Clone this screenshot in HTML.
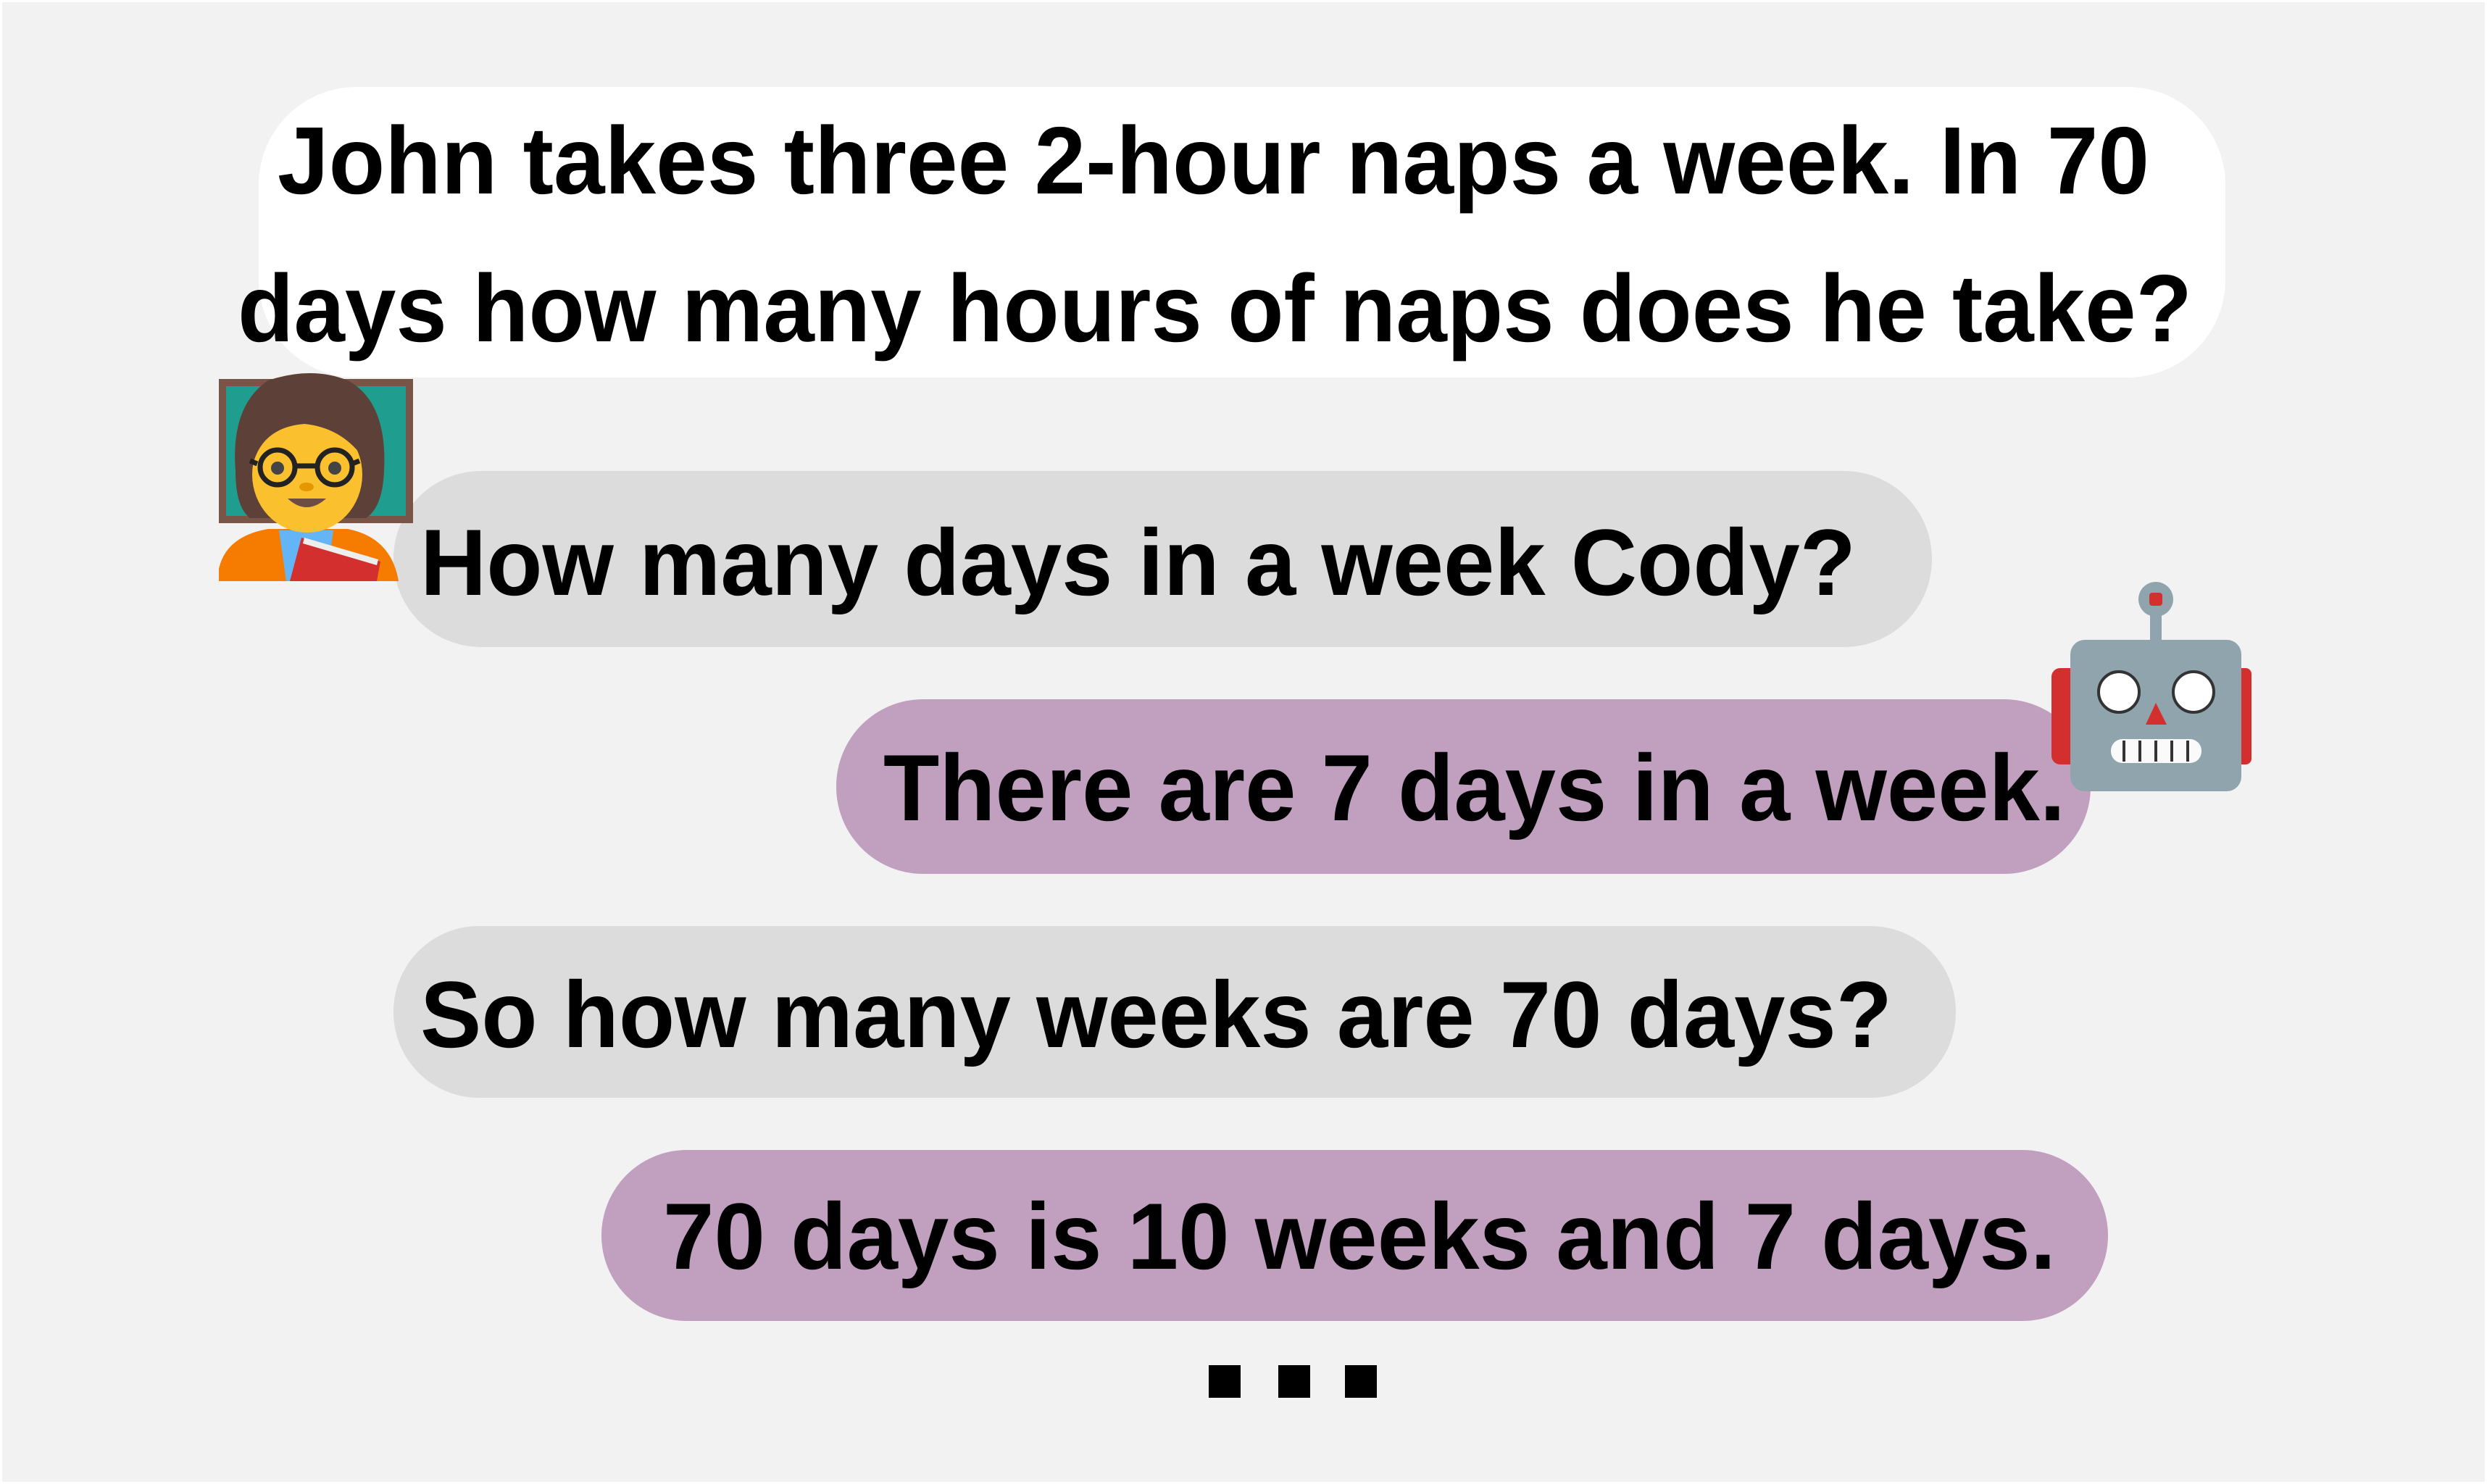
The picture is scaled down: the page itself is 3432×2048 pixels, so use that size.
<!DOCTYPE html>
<html><head><meta charset="utf-8"><style>html,body{margin:0;padding:0;background:#fff}svg{display:block}</style></head>
<body>
<svg width="3432" height="2048" viewBox="0 0 3432 2048" xmlns="http://www.w3.org/2000/svg" font-family="'Liberation Sans', Arial, sans-serif" font-weight="bold">
<rect x="3" y="3" width="3426" height="2042" fill="#f2f2f2"/>
<rect x="357" y="120" width="2714" height="401" rx="135" fill="#ffffff"/>
<text x="383" y="267" font-size="132" textLength="2583" lengthAdjust="spacingAndGlyphs">John takes three 2-hour naps a week. In 70</text>
<text x="328" y="471" font-size="132" textLength="2697" lengthAdjust="spacingAndGlyphs">days how many hours of naps does he take?</text>
<rect x="543" y="650" width="2123" height="243" rx="121" fill="#dcdcdc"/>
<text x="580" y="821" font-size="130" textLength="1981" lengthAdjust="spacingAndGlyphs">How many days in a week Cody?</text>
<rect x="1154" y="965" width="1731" height="241" rx="120" fill="#c19fbf"/>
<text x="1219" y="1132" font-size="130" textLength="1631" lengthAdjust="spacingAndGlyphs">There are 7 days in a week.</text>
<rect x="543" y="1278" width="2156" height="237" rx="118" fill="#dcdcdc"/>
<text x="580" y="1445" font-size="130" textLength="2031" lengthAdjust="spacingAndGlyphs">So how many weeks are 70 days?</text>
<rect x="830" y="1587" width="2079" height="236" rx="118" fill="#c19fbf"/>
<text x="915" y="1751" font-size="130" textLength="1922" lengthAdjust="spacingAndGlyphs">70 days is 10 weeks and 7 days.</text>
<rect x="1668" y="1884" width="44" height="45" fill="#000"/>
<rect x="1764" y="1884" width="44" height="45" fill="#000"/>
<rect x="1856" y="1884" width="44" height="45" fill="#000"/>
<!-- teacher emoji -->
<rect x="302" y="523" width="268" height="199" fill="#795548"/>
<rect x="312" y="533" width="248" height="179" fill="#1f9e8f"/>
<path d="M302 802 L302 785 Q312 740 370 730 L480 730 Q540 742 550 802 Z" fill="#f57c00"/>
<path d="M385 732 L460 732 L450 802 L395 802 Z" fill="#64b5f6"/>
<path d="M416 742 L525 775 L520 802 L400 802 Z" fill="#d32f2f"/>
<path d="M420 742 L522 772 L520 780 L418 750 Z" fill="#eeeeee"/>
<path d="M325 650 Q318 560 370 525 Q430 505 480 525 Q535 555 530 650 Q528 700 505 715 L345 715 Q325 700 325 650 Z" fill="#5d4037"/>
<ellipse cx="424" cy="655" rx="76" ry="80" fill="#fbc02d"/>
<path d="M348 645 Q360 590 420 585 Q470 590 500 630 L505 580 Q470 540 420 545 Q365 550 345 600 Z" fill="#5d4037"/>
<circle cx="383" cy="645" r="24" fill="none" stroke="#222" stroke-width="7"/>
<circle cx="462" cy="645" r="24" fill="none" stroke="#222" stroke-width="7"/>
<path d="M407 643 L438 643 M355 640 L345 636 M486 640 L496 636" stroke="#222" stroke-width="7"/>
<circle cx="383" cy="646" r="9" fill="#444"/>
<circle cx="462" cy="646" r="9" fill="#444"/>
<ellipse cx="423" cy="672" rx="10" ry="6" fill="#e59600"/>
<path d="M397 688 Q423 712 450 688 Z" fill="#6d4c41"/>
<!-- robot emoji -->
<rect x="2831" y="922" width="40" height="133" rx="12" fill="#d32f2f"/>
<rect x="3075" y="922" width="32" height="133" rx="8" fill="#d32f2f"/>
<rect x="2967" y="840" width="16" height="50" fill="#90a4ae"/>
<circle cx="2975" cy="827" r="24" fill="#90a4ae"/>
<rect x="2966" y="818" width="18" height="18" rx="4" fill="#d32f2f"/>
<rect x="2857" y="883" width="236" height="209" rx="20" fill="#90a4ae"/>
<circle cx="2924" cy="955" r="28" fill="#fff" stroke="#333" stroke-width="4"/>
<circle cx="3027" cy="955" r="28" fill="#fff" stroke="#333" stroke-width="4"/>
<path d="M2975 970 L2961 1000 L2990 1000 Z" fill="#d32f2f"/>
<rect x="2913" y="1020" width="125" height="33" rx="16" fill="#fafafa"/>
<g stroke="#333" stroke-width="4"><path d="M2931 1022V1051M2953 1022V1051M2975 1022V1051M2997 1022V1051M3019 1022V1051"/></g>
</svg>
</body></html>
